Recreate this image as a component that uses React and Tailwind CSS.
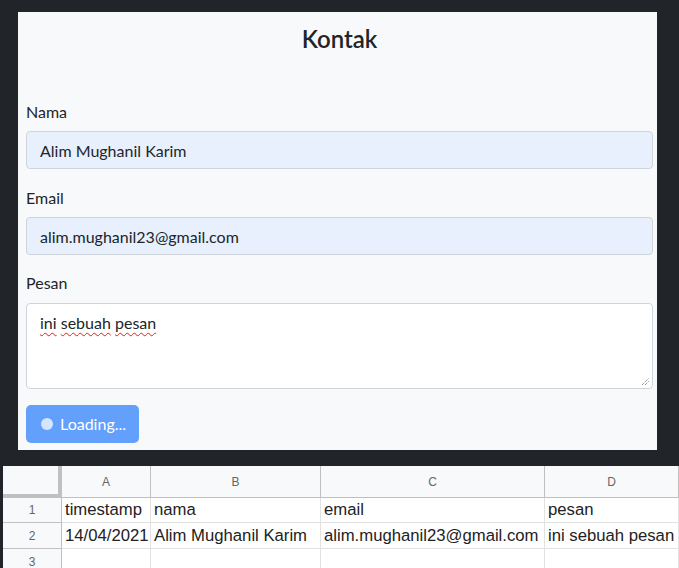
import React from "react";

const formFont = { fontFamily: "Lato, 'Noto Sans', sans-serif" };

const Field = ({ label, value, top }) => (
  <div className={top}>
    <label className="block h-6 leading-6 text-[16px] text-[#212529]">{label}</label>
    <input
      readOnly
      value={value}
      className="mt-[7px] block h-[38px] w-full rounded-[4px] border border-[#ced4da] bg-[#e8f0fe] px-[13px] text-[16px] text-[#212529] outline-none"
      style={formFont}
    />
  </div>
);

const cols = [
  { key: "A", w: "w-[89px]" },
  { key: "B", w: "w-[170px]" },
  { key: "C", w: "w-[224px]" },
  { key: "D", w: "flex-1" },
];

const rows = [
  { h: "h-[25px]", cells: ["timestamp", "nama", "email", "pesan"] },
  { h: "h-[26px]", cells: ["14/04/2021", "Alim Mughanil Karim", "alim.mughanil23@gmail.com", "ini sebuah pesan"] },
  { h: "h-[26px]", cells: ["", "", "", ""] },
];

const Sheet = () => (
  <div className="ml-[3px] mt-[16px] bg-white" style={{ fontFamily: "'Liberation Sans', Arial, sans-serif" }}>
    {/* column header */}
    <div className="flex h-[32px]">
      <div className="w-[59px] shrink-0 border-r-4 border-b-4 border-[#c0c0c0] bg-[#f8f9fa]" />
      {cols.map((c) => (
        <div
          key={c.key}
          className={`${c.w} shrink-0 flex items-center justify-center border-r border-b border-[#c0c0c0] bg-[#f8f9fa] text-[12px] text-[#666]`}
        >
          {c.key}
        </div>
      ))}
    </div>
    {rows.map((r, i) => (
      <div key={i} className={`flex ${r.h}`}>
        <div className="w-[59px] shrink-0 flex items-center justify-center border-r border-b border-[#c0c0c0] bg-[#f8f9fa] text-[12px] text-[#666]">
          {i + 1}
        </div>
        {r.cells.map((v, j) => (
          <div
            key={j}
            className={`${cols[j].w} shrink-0 flex items-center overflow-hidden whitespace-nowrap border-r border-b border-[#e2e2e3] pl-[3px] text-[16.7px] text-[#222]`}
          >
            {v}
          </div>
        ))}
      </div>
    ))}
  </div>
);

export default function App() {
  return (
    <div className="h-[568px] w-[679px] overflow-hidden bg-[#212529]">
      <div className="ml-[18px] pt-[12px]">
        <div className="w-[639px] bg-[#f8f9fa] pl-2 pr-1 pt-[11px] pb-[7px] text-[#212529]" style={formFont}>
          <h3 className="h-8 text-center text-[24px] font-semibold leading-8">Kontak</h3>

          <Field label="Nama" value="Alim Mughanil Karim" top="mt-[45px]" />
          <Field label="Email" value="alim.mughanil23@gmail.com" top="mt-[17px]" />

          <div className="mt-[16px]">
            <label className="block h-6 leading-6 text-[16px]">Pesan</label>
            <div className="relative mt-[8px] h-[86px] w-full rounded-[4px] border border-[#ced4da] bg-white px-[13px] py-[7px] text-[16px] leading-6">
              <span className="underline decoration-wavy decoration-[#e0201b] decoration-1 underline-offset-[3px]">ini</span>{" "}
              <span className="underline decoration-wavy decoration-[#e0201b] decoration-1 underline-offset-[3px]">sebuah</span>{" "}
              <span className="underline decoration-wavy decoration-[#e0201b] decoration-1 underline-offset-[3px]">pesan</span>
              <svg className="absolute bottom-[2px] right-[2px]" width="9" height="9" viewBox="0 0 9 9">
                <path d="M1 8 L8 1 M4 8 L8 4" stroke="#6b6b6b" strokeWidth="1" strokeDasharray="1 1" />
              </svg>
            </div>
          </div>

          <button
            type="button"
            disabled
            className="mt-[16px] flex h-[38px] w-[113px] items-center gap-[7px] rounded-[5px] bg-[#62a0fc] pl-[15px] text-[16px] text-white"
          >
            <span className="block h-[12px] w-[12px] rounded-full bg-[#d6e5fe]" />
            <span>Loading...</span>
          </button>
        </div>
      </div>
      <Sheet />
    </div>
  );
}
